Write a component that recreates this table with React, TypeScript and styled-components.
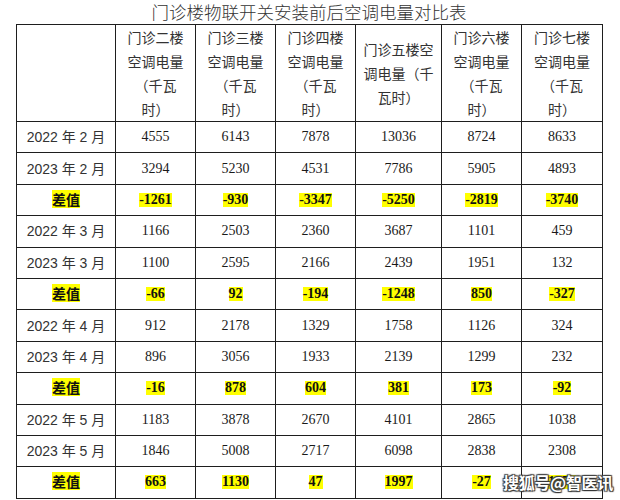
import React from 'react';
import styled, { createGlobalStyle } from 'styled-components';

const Global = createGlobalStyle`
  html, body { margin: 0; padding: 0; background: #fff; }
`;

const Page = styled.div`
  position: relative;
  width: 620px;
  height: 500px;
  overflow: hidden;
  padding-left: 16px;
  box-sizing: border-box;
`;

const Title = styled.h1`
  margin: 0;
  width: 586px;
  height: 24px;
  text-align: center;
  font: 300 17.5px/26px "Liberation Serif", "Noto Sans CJK SC", serif;
  color: #333;
`;

const Table = styled.table`
  border-collapse: collapse;
  table-layout: fixed;
  width: 587px;
`;

const HeadCell = styled.th`
  border: 1px solid #1e1e1e;
  padding: 0;
  height: 94px;
  font: 400 14px/24px "Noto Sans CJK SC", sans-serif;
  color: #333;
  text-align: center;
  vertical-align: middle;
  white-space: nowrap;
`;

const HeadLine = styled.span`
  display: block;
`;

const Row = styled.tr`
  height: 31.4px;
`;

const Cell = styled.td<{ $label?: boolean }>`
  border: 1px solid #1e1e1e;
  padding: 0;
  text-align: center;
  vertical-align: middle;
  color: ${p => (p.$label ? '#333' : '#1a1a1a')};
  font: ${p =>
    p.$label
      ? '400 14px/20px "Liberation Sans", "Noto Sans CJK SC", sans-serif'
      : '400 14px/20px "Liberation Serif", serif'};
`;

const Highlight = styled.span<{ $cjk?: boolean }>`
  display: inline-block;
  background: #ffff00;
  color: #111;
  font: ${p =>
    p.$cjk
      ? '700 14px/18px "Noto Sans CJK SC", sans-serif'
      : '700 14px/14px "Liberation Serif", serif'};
`;

const Watermark = styled.div`
  position: absolute;
  left: 503px;
  top: 472px;
  font: 700 16px/20px "Noto Sans CJK SC", sans-serif;
  color: #fff;
  letter-spacing: -0.3px;
  text-shadow: 0 0 1px #333, 1px 1px 1px #333, -1px -1px 1px #444, 1px -1px 1px #444, -1px 1px 1px #444;
`;

const cols = [99, 80, 80, 80, 86, 80, 81];
const std = (n: string) => [`门诊${n}楼`, '空调电量', '（千瓦', '时）'];
const heads: string[][] = [
  std('二'),
  std('三'),
  std('四'),
  ['门诊五楼空', '调电量（千', '瓦时）'],
  std('六'),
  std('七'),
];

type R = { label: string; values: string[]; diff?: boolean };
const rows: R[] = [
  { label: '2022 年 2 月', values: ['4555', '6143', '7878', '13036', '8724', '8633'] },
  { label: '2023 年 2 月', values: ['3294', '5230', '4531', '7786', '5905', '4893'] },
  { label: '差值', values: ['-1261', '-930', '-3347', '-5250', '-2819', '-3740'], diff: true },
  { label: '2022 年 3 月', values: ['1166', '2503', '2360', '3687', '1101', '459'] },
  { label: '2023 年 3 月', values: ['1100', '2595', '2166', '2439', '1951', '132'] },
  { label: '差值', values: ['-66', '92', '-194', '-1248', '850', '-327'], diff: true },
  { label: '2022 年 4 月', values: ['912', '2178', '1329', '1758', '1126', '324'] },
  { label: '2023 年 4 月', values: ['896', '3056', '1933', '2139', '1299', '232'] },
  { label: '差值', values: ['-16', '878', '604', '381', '173', '-92'], diff: true },
  { label: '2022 年 5 月', values: ['1183', '3878', '2670', '4101', '2865', '1038'] },
  { label: '2023 年 5 月', values: ['1846', '5008', '2717', '6098', '2838', '2308'] },
  { label: '差值', values: ['663', '1130', '47', '1997', '-27', '1270'], diff: true },
];

export default function App() {
  return (
    <>
      <Global />
      <Page>
        <Title>门诊楼物联开关安装前后空调电量对比表</Title>
        <Table>
          <colgroup>
            {cols.map((w, i) => (
              <col key={i} style={{ width: w }} />
            ))}
          </colgroup>
          <thead>
            <tr>
              <HeadCell />
              {heads.map((lines, i) => (
                <HeadCell key={i}>
                  {lines.map(l => (
                    <HeadLine key={l}>{l}</HeadLine>
                  ))}
                </HeadCell>
              ))}
            </tr>
          </thead>
          <tbody>
            {rows.map((r, i) => (
              <Row key={i}>
                <Cell $label>
                  {r.diff ? <Highlight $cjk>{r.label}</Highlight> : r.label}
                </Cell>
                {r.values.map((v, j) => (
                  <Cell key={j}>{r.diff ? <Highlight>{v}</Highlight> : v}</Cell>
                ))}
              </Row>
            ))}
          </tbody>
        </Table>
        <Watermark>搜狐号@智医讯</Watermark>
      </Page>
    </>
  );
}
